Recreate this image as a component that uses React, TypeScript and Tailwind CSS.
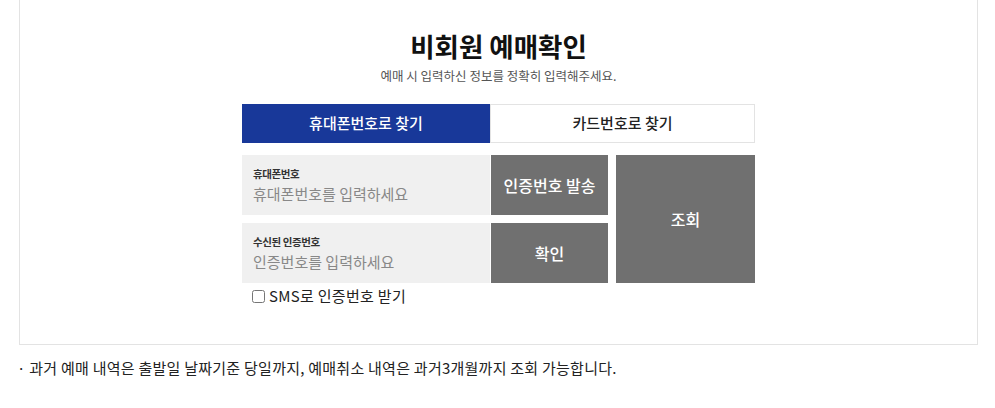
import React from 'react';

const font = { fontFamily: '"Noto Sans CJK KR", "Noto Sans", sans-serif' };

const InputRow = ({ label, placeholder }: { label: string; placeholder: string }) => (
  <label className="flex flex-col justify-center h-[60px] bg-[#f0f0f0] pl-[11px] w-[248px]">
    <span className="text-[10.5px] font-bold leading-[14px] tracking-[-0.4px] text-[#333]">{label}</span>
    <input
      className="mt-[3px] bg-transparent outline-none text-[15px] leading-[20px] text-[#333] placeholder:text-[#888]"
      placeholder={placeholder}
    />
  </label>
);

const App: React.FC = () => {
  return (
    <div className="w-[995px] h-[408px] bg-white" style={font}>
      <div className="ml-[19px] mr-[17px] border border-t-0 border-[#e3e3e3] pt-[30px] pb-[38px]">
        <h1 className="text-center text-[26.5px] leading-[31px] font-bold text-[#111]">
          비회원 예매확인
        </h1>
        <p className="mt-[6px] text-center text-[12.5px] leading-[18px] text-[#555]">
          예매 시 입력하신 정보를 정확히 입력해주세요.
        </p>

        <div className="w-[513px] mx-auto mt-[19px]">
          {/* tabs */}
          <div className="flex h-[39px]">
            <button className="w-[248px] bg-[#183899] text-white text-[15px] font-medium">
              휴대폰번호로 찾기
            </button>
            <button className="flex-1 border border-[#e3e3e3] bg-white text-[#222] text-[15px] font-medium">
              카드번호로 찾기
            </button>
          </div>

          {/* form */}
          <div className="flex mt-[12px] gap-[8px]">
            <div className="flex flex-col gap-[8px]">
              <div className="flex">
                <InputRow label="휴대폰번호" placeholder="휴대폰번호를 입력하세요" />
                <button className="w-[117px] ml-[1px] bg-[#707070] text-white text-[16px] font-medium">
                  인증번호 발송
                </button>
              </div>
              <div className="flex">
                <InputRow label="수신된 인증번호" placeholder="인증번호를 입력하세요" />
                <button className="w-[117px] ml-[1px] bg-[#707070] text-white text-[16px] font-medium">
                  확인
                </button>
              </div>
            </div>
            <button className="flex-1 bg-[#707070] text-white text-[16px] font-medium">조회</button>
          </div>

          <label className="flex items-center mt-[3px] pl-[10px] h-[20px] text-[15px] tracking-[0.3px] text-[#222]">
            <input type="checkbox" className="w-[13px] h-[13px] mr-[4px] accent-[#183899]" />
            SMS로 인증번호 받기
          </label>
        </div>
      </div>

      <p className="mt-[13px] ml-[17px] text-[15px] leading-[20px] tracking-[0.25px] text-[#222]">
        · 과거 예매 내역은 출발일 날짜기준 당일까지, 예매취소 내역은 과거3개월까지 조회 가능합니다.
      </p>
    </div>
  );
};

export default App;
